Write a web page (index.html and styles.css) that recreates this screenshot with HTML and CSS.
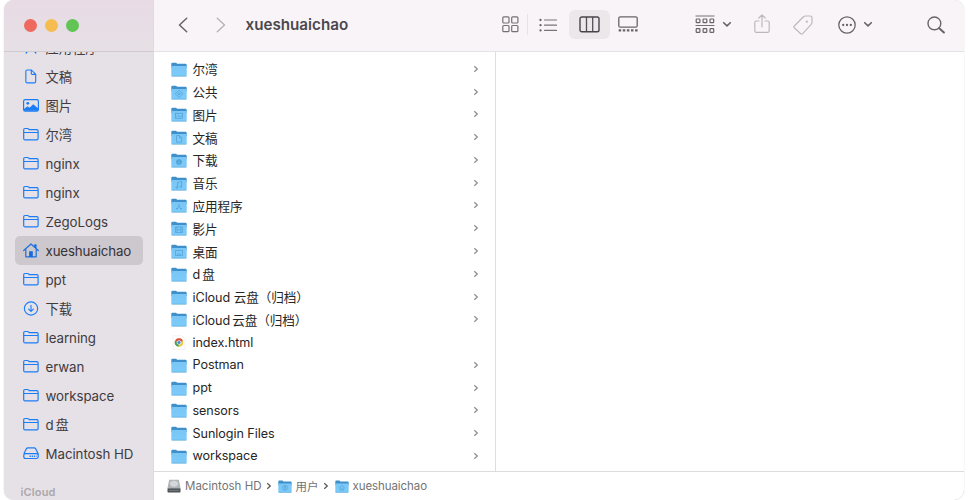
FILE: index.html
```html
<!DOCTYPE html>
<html lang="zh-CN">
<head>
<meta charset="utf-8">
<title>xueshuaichao</title>
<link rel="stylesheet" href="styles.css">
</head>
<body>
<svg class="defs" aria-hidden="true">
  <defs>
    <linearGradient id="blue" x1="0" y1="0" x2="0" y2="1"><stop offset="0" stop-color="#7ac6f5"/><stop offset="1" stop-color="#7ccbfa"/></linearGradient>
  </defs>
  <symbol id="side-folder" viewBox="0 0 16 14"><path d="M.7 11V2.300Q.7 1 2 1h2.600q.6 0 1 .5l.6.6h7.600q1.300 0 1.300 1.300v7.700q0 1.300-1.300 1.300H2Q.7 12.400 .7 11zM.7 5h14.400" fill="none" stroke="#1a7cf7" stroke-width="1.200"/></symbol>
  <symbol id="side-doc" viewBox="0 0 16 16"><path d="M3.800 1h4.700l4.500 4.500v7.800q0 1.500-1.500 1.500H4q-1.500 0-1.500-1.500V2.500Q2.500 1 3.800 1zM8.300 1v3.500q0 1.200 1.200 1.200H13" fill="none" stroke="#1a7cf7" stroke-width="1.200"/></symbol>
  <symbol id="side-image" viewBox="0 0 16 14"><rect x=".6" y="1.100" width="14.800" height="11.500" rx="1.600" fill="none" stroke="#1a7cf7" stroke-width="1.200"/><circle cx="4.800" cy="4.800" r="1.400" fill="#1a7cf7"/><path d="M1 10.500l3.500-2.800 2 1.500 3.700-3.500L15 9.800v2.500H1z" fill="#1a7cf7"/></symbol>
  <symbol id="side-home" viewBox="0 0 16 15"><path d="M.7 7.500L8 1l7.300 6.500M2.800 6.500v7.300h10.400V6.500M11.800 4V1.800h1.200V5" fill="none" stroke="#1a6fe0" stroke-width="1.200" stroke-linejoin="round" stroke-linecap="round"/><path d="M6.100 8.200h3.700V14H6.100z" fill="#1769dc"/></symbol>
  <symbol id="side-down" viewBox="0 0 16 16"><circle cx="8" cy="8" r="7.100" fill="none" stroke="#1a7cf7" stroke-width="1.200"/><path d="M8 4.600v6.300M5.500 8.600L8 11l2.500-2.400" fill="none" stroke="#1a7cf7" stroke-width="1.200" stroke-linecap="round" stroke-linejoin="round"/></symbol>
  <symbol id="side-disk" viewBox="0 0 16 13"><path d="M.8 7L3.200 2Q3.700.9 5 .9h6q1.300 0 1.800 1.100L15.200 7v2.800q0 1.700-1.700 1.700h-11Q.8 11.500.8 9.800V8.200Q.8 6.600 2.500 6.600h11q1.700 0 1.700 1.600" fill="none" stroke="#1a7cf7" stroke-width="1.200"/><path d="M6.500 9.200h7" stroke="#1a7cf7" stroke-width="1.400" stroke-dasharray="1.300 .9"/></symbol>
  <symbol id="side-app" viewBox="0 0 16 14"><path d="M7 2l6 11M9 2L3 13M1 9.500h14" fill="none" stroke="#1a7cf7" stroke-width="1.500"/></symbol>
  <symbol id="folder" viewBox="0 0 16 15"><path d="M.3 1.700Q.3.700 1.300.700h3.800l1 1.100h8.400q1.200 0 1.200 1.200v3H.3z" fill="#3f8fca"/><path d="M.3 4h15.400v9.300q0 1-1 1H1.300q-1 0-1-1z" fill="url(#blue)"/><path class="edge" d="M.5 13.700h15v.8H.5z" fill="#63a9d8"/></symbol>
  <symbol id="chevron" viewBox="0 0 6 8"><path d="M1.300 1.300L4.300 4 1.300 6.700" fill="none" stroke="currentColor" stroke-width="1.200"/></symbol>
  <symbol id="down" viewBox="0 0 10 7"><path d="M1.700 1.700L5 4.900l3.300-3.200" fill="none" stroke="#69646a" stroke-width="1.600" stroke-linecap="round" stroke-linejoin="round"/></symbol>
  <symbol id="m-public" viewBox="0 0 16 15"><path d="M8 5.200l3.700 3.700L8 12.600 4.300 8.900z"/><circle cx="8" cy="8.900" r="1"/></symbol>
  <symbol id="m-image" viewBox="0 0 16 15"><rect x="4.500" y="6.300" width="7" height="5"/><path d="M5 10.500l2-2 2 1.500 2-1"/></symbol>
  <symbol id="m-doc" viewBox="0 0 16 15"><path d="M5.500 5.500h3l2.200 2.200v4.500H5.500zM8.500 5.500v2.300h2"/></symbol>
  <symbol id="m-down" viewBox="0 0 16 15"><circle cx="8" cy="9" r="2.500" fill="#4e9fd4"/><path d="M8 7.500v3M7 9.500l1 1 1-1" stroke="#7ac6f5"/></symbol>
  <symbol id="m-music" viewBox="0 0 16 15"><path d="M6.600 11.500v-5l4-1v5"/><circle cx="5.800" cy="11.500" r=".8"/><circle cx="9.800" cy="10.700" r=".8"/></symbol>
  <symbol id="m-app" viewBox="0 0 16 15"><path d="M8 6v2l-2.500 3.500M8 8l2.500 3.500M5 10.500h2M9 10.500h2"/></symbol>
  <symbol id="m-film" viewBox="0 0 16 15"><path d="M4.500 6h7v5.500h-7zM6 6v5.500M10 6v5.500M6 8.800h4"/></symbol>
  <symbol id="m-desk" viewBox="0 0 16 15"><path d="M4.500 6.500h7v5h-7zM6 10.200h4"/></symbol>
  <symbol id="m-user" viewBox="0 0 16 15"><circle cx="8" cy="9" r="2.800"/><circle cx="8" cy="8.200" r=".8"/><path d="M6.300 11q1.700-2 3.400 0"/></symbol>
  <symbol id="m-home" viewBox="0 0 16 15"><path d="M5 9l3-2.800L11 9M6 8.500v3.200h4V8.500M8 9.500v2"/></symbol>
</svg>

<div class="window">
  <aside class="sidebar">
    <header class="lights"><i class="red"></i><i class="yellow"></i><i class="green"></i></header>
    <nav class="places">
      <a class="first"><svg><use href="#side-app"/></svg><span>应用程序</span></a>
      <a><svg><use href="#side-doc"/></svg><span>文稿</span></a>
      <a><svg><use href="#side-image"/></svg><span>图片</span></a>
      <a><svg><use href="#side-folder"/></svg><span>尔湾</span></a>
      <a><svg><use href="#side-folder"/></svg><span>nginx</span></a>
      <a><svg><use href="#side-folder"/></svg><span>nginx</span></a>
      <a><svg><use href="#side-folder"/></svg><span>ZegoLogs</span></a>
      <a class="selected"><svg><use href="#side-home"/></svg><span>xueshuaichao</span></a>
      <a><svg><use href="#side-folder"/></svg><span>ppt</span></a>
      <a><svg><use href="#side-down"/></svg><span>下载</span></a>
      <a><svg><use href="#side-folder"/></svg><span>learning</span></a>
      <a><svg><use href="#side-folder"/></svg><span>erwan</span></a>
      <a><svg><use href="#side-folder"/></svg><span>workspace</span></a>
      <a><svg><use href="#side-folder"/></svg><span>d<b class="thin"></b>盘</span></a>
      <a><svg><use href="#side-disk"/></svg><span>Macintosh HD</span></a>
    </nav>
    <h2>iCloud</h2>
  </aside>

  <main class="main">
    <header class="toolbar">
      <svg class="back" viewBox="0 0 10 16"><path d="M8.700 1.200L1.500 8l7.200 6.800" fill="none" stroke="#69646a" stroke-width="1.500" stroke-linecap="round" stroke-linejoin="round"/></svg>
      <svg class="forward" viewBox="0 0 10 16"><path d="M1.300 1.200L8.500 8l-7.200 6.800" fill="none" stroke="#b9b4b9" stroke-width="1.500" stroke-linecap="round" stroke-linejoin="round"/></svg>
      <h1>xueshuaichao</h1>
      <svg class="grid" viewBox="0 0 17 17"><g fill="none" stroke="#767077" stroke-width="1.200"><rect x=".8" y=".8" width="6.200" height="6.200" rx="1"/><rect x="9.700" y=".8" width="6.200" height="6.200" rx="1"/><rect x=".8" y="9.500" width="6.200" height="6.200" rx="1"/><rect x="9.700" y="9.500" width="6.200" height="6.200" rx="1"/></g></svg>
      <i class="rule"></i>
      <svg class="list" viewBox="0 0 19 14"><g fill="#69646a"><circle cx="1.500" cy="2" r="1.150"/><circle cx="1.500" cy="7.200" r="1.150"/><circle cx="1.500" cy="12.400" r="1.150"/></g><path d="M5.500 2h12M5.500 7.200h12M5.500 12.400h12" stroke="#79737a" stroke-width="1.200" stroke-linecap="round"/></svg>
      <span class="active"><svg viewBox="0 0 21 17"><path d="M7.500 1v15M13.700 1v15" stroke="#545056" stroke-width="1.300"/><rect x="1" y="1" width="19" height="14.700" rx="1.800" fill="none" stroke="#49454b" stroke-width="1.400"/></svg></span>
      <svg class="gallery" viewBox="0 0 20 17"><rect x=".8" y=".8" width="18.400" height="10.400" rx="1.500" fill="none" stroke="#69646a" stroke-width="1.300"/><path d="M.7 14.400h19" stroke="#69646a" stroke-width="2.400" stroke-dasharray="2.500 1.600"/></svg>
      <svg class="group" viewBox="0 0 20 19"><path d="M.5 1h19M.5 10.500h19" stroke="#767077" stroke-width="1.200"/><g fill="none" stroke="#69646a" stroke-width="1.200"><rect x="1.200" y="4" width="3.700" height="3.700" rx=".7"/><rect x="8.100" y="4" width="3.700" height="3.700" rx=".7"/><rect x="15" y="4" width="3.700" height="3.700" rx=".7"/><rect x="1.200" y="13.700" width="3.700" height="3.700" rx=".7"/><rect x="8.100" y="13.700" width="3.700" height="3.700" rx=".7"/><rect x="15" y="13.700" width="3.700" height="3.700" rx=".7"/></g></svg>
      <svg class="down"><use href="#down"/></svg>
      <svg class="share" viewBox="0 0 16 20"><path d="M5 7H2.200Q.8 7 .8 8.400v8.400q0 1.600 1.600 1.600h11.200q1.600 0 1.600-1.600V8.400Q15.200 7 13.800 7H11M8 13V1.200M4.800 4L8 1l3.200 3" fill="none" stroke="#bdb8bd" stroke-width="1.200" stroke-linecap="round" stroke-linejoin="round"/></svg>
      <svg class="tag" viewBox="0 0 20 20"><path d="M1.300 11L10.200 2q1-1 2.500-1h4.500q1.800 0 1.800 1.800v4.500q0 1.400-1 2.400l-8.300 9q-1 1-2 0l-6.400-6q-.9-.8 0-1.700z" fill="none" stroke="#bdb8bd" stroke-width="1.200"/><circle cx="13.800" cy="6.700" r="1.100" fill="#bdb8bd"/></svg>
      <svg class="more" viewBox="0 0 18 18"><circle cx="9" cy="9" r="8.200" fill="none" stroke="#69646a" stroke-width="1.300"/><g fill="#69646a"><circle cx="5.200" cy="9" r="1.150"/><circle cx="9" cy="9" r="1.150"/><circle cx="12.800" cy="9" r="1.150"/></g></svg>
      <svg class="down"><use href="#down"/></svg>
      <svg class="search" viewBox="0 0 18 18"><circle cx="7.400" cy="7.400" r="6.400" fill="none" stroke="#69646a" stroke-width="1.400"/><path d="M12.200 12.200l4.700 4.300" stroke="#69646a" stroke-width="2" stroke-linecap="round"/></svg>
    </header>

    <div class="columns">
      <ul class="files">
        <li><svg class="icon"><use href="#folder"/></svg><span>尔湾</span><svg class="arrow"><use href="#chevron"/></svg></li>
        <li><svg class="icon"><use href="#folder"/><use href="#m-public"/></svg><span>公共</span><svg class="arrow"><use href="#chevron"/></svg></li>
        <li><svg class="icon"><use href="#folder"/><use href="#m-image"/></svg><span>图片</span><svg class="arrow"><use href="#chevron"/></svg></li>
        <li><svg class="icon"><use href="#folder"/><use href="#m-doc"/></svg><span>文稿</span><svg class="arrow"><use href="#chevron"/></svg></li>
        <li><svg class="icon"><use href="#folder"/><use href="#m-down"/></svg><span>下载</span><svg class="arrow"><use href="#chevron"/></svg></li>
        <li><svg class="icon"><use href="#folder"/><use href="#m-music"/></svg><span>音乐</span><svg class="arrow"><use href="#chevron"/></svg></li>
        <li><svg class="icon"><use href="#folder"/><use href="#m-app"/></svg><span>应用程序</span><svg class="arrow"><use href="#chevron"/></svg></li>
        <li><svg class="icon"><use href="#folder"/><use href="#m-film"/></svg><span>影片</span><svg class="arrow"><use href="#chevron"/></svg></li>
        <li><svg class="icon"><use href="#folder"/><use href="#m-desk"/></svg><span>桌面</span><svg class="arrow"><use href="#chevron"/></svg></li>
        <li><svg class="icon"><use href="#folder"/></svg><span>d<b class="thin"></b>盘</span><svg class="arrow"><use href="#chevron"/></svg></li>
        <li><svg class="icon"><use href="#folder"/></svg><span>iCloud 云盘（归档）</span><svg class="arrow"><use href="#chevron"/></svg></li>
        <li><svg class="icon"><use href="#folder"/></svg><span>iCloud<b class="thin"></b>云盘（归档）</span><svg class="arrow"><use href="#chevron"/></svg></li>
        <li><svg class="icon html" viewBox="0 0 16 15"><path d="M2 .4h8.500L14 4v10.500H2z" fill="#fdfdfd" stroke="#ececec" stroke-width=".6"/><circle cx="8" cy="7.500" r="4.300" fill="#efc63f"/><path d="M4.100 5.700A4.300 4.300 0 0 1 11.900 5.700L8 7.500z" fill="#dd4a3f"/><path d="M4.100 5.700A4.300 4.300 0 0 0 7.500 11.800L8 7.500z" fill="#43a35a"/><circle cx="8" cy="7.500" r="1.900" fill="#3f7fdc" stroke="#fff" stroke-width=".7"/></svg><span>index.html</span></li>
        <li><svg class="icon"><use href="#folder"/></svg><span>Postman</span><svg class="arrow"><use href="#chevron"/></svg></li>
        <li><svg class="icon"><use href="#folder"/></svg><span>ppt</span><svg class="arrow"><use href="#chevron"/></svg></li>
        <li><svg class="icon"><use href="#folder"/></svg><span>sensors</span><svg class="arrow"><use href="#chevron"/></svg></li>
        <li><svg class="icon"><use href="#folder"/></svg><span>Sunlogin Files</span><svg class="arrow"><use href="#chevron"/></svg></li>
        <li><svg class="icon"><use href="#folder"/></svg><span>workspace</span><svg class="arrow"><use href="#chevron"/></svg></li>
      </ul>
      <div class="empty"></div>
    </div>

    <footer class="path">
      <svg class="hd" viewBox="0 0 14 14"><path d="M2.200.7h9.600L13.500 9H.5z" fill="#b0b4b6"/><ellipse cx="7" cy="4.800" rx="4" ry="3" fill="#d5d8d9"/><path d="M.5 9.300h13v3.500q0 .7-.7.700H1.200q-.7 0-.7-.7z" fill="#4d5356"/><path d="M2 11.400h10" stroke="#80888b" stroke-width=".8"/></svg>
      <span>Macintosh HD</span>
      <svg class="arrow"><use href="#chevron"/></svg>
      <svg class="mini"><use href="#folder"/><use href="#m-user"/></svg>
      <span>用户</span>
      <svg class="arrow"><use href="#chevron"/></svg>
      <svg class="mini"><use href="#folder"/><use href="#m-home"/></svg>
      <span class="current">xueshuaichao</span>
    </footer>
  </main>
</div>
</body>
</html>
```
FILE: styles.css
```css
* { box-sizing: border-box; }
body {
  margin: 0;
  width: 972px;
  height: 500px;
  overflow: hidden;
  background: #fff;
  font-family: Inter, "Noto Sans CJK SC", sans-serif;
  font-size: 13px;
  color: #262626;
}
svg { display: block; flex: none; }
.defs { position: absolute; width: 0; height: 0; }
.window {
  display: flex;
  width: 960px;
  height: 500px;
  margin-left: 4px;
  overflow: hidden;
  border-radius: 10px;
  background: #fff;
  box-shadow: 0 0 1px #aaa;
}

.sidebar {
  width: 150px;
  flex: none;
  display: flex;
  flex-direction: column;
  background: #e6e1e6;
  border-right: 1px solid #dedade;
}
.lights {
  height: 52px;
  flex: none;
  display: flex;
  align-items: center;
  gap: 7.700px;
  padding: 0 0 1px 20.300px;
  border-bottom: 1px solid #cfcacf;
  background: linear-gradient(#e8dbe5, #e6e0e5);
}
.lights i { width: 13px; height: 13px; border-radius: 50%; }
.red { background: #ee6a5f; }
.yellow { background: #f5bd4f; }
.green { background: #61c454; }
.places { height: 416px; overflow: hidden; padding: 0 10.500px 0 10.500px; }
.places a {
  height: 29px;
  display: flex;
  align-items: center;
  gap: 7px;
  padding-left: 8px;
  border-radius: 5px;
  font-size: 13.300px;
  letter-spacing: -.05px;
  color: #3f3b40;
  white-space: nowrap;
}
.places .first { margin-top: -19px; }
.places .selected { background: #cdc8cd; color: #363238; }
.places .selected span { letter-spacing: -.13px; }
.places svg { width: 16px; height: 15px; }
.thin { display: inline-block; width: 2px; }
.sidebar h2 {
  margin: 16px 0 0 16.500px;
  font-size: 11px;
  line-height: 16px;
  font-weight: 600;
  letter-spacing: .15px;
  color: #aca7ac;
}

.main { flex: 1; min-width: 0; display: flex; flex-direction: column; }
.toolbar {
  height: 52px;
  flex: none;
  display: flex;
  align-items: center;
  padding: 0 19.500px 2px 23.500px;
  background: #f9f4f8;
  border-bottom: 1px solid #e5e2e5;
}
.back, .forward { width: 10px; height: 16px; }
.forward { margin-left: 28px; }
.toolbar h1 { width: 230px; margin: 1px 0 0 20px; font-size: 15.200px; line-height: 20px; font-weight: 600; color: #4b474c; }
.grid { width: 17px; height: 17px; margin-left: 26px; }
.rule { width: 1px; height: 21px; margin-left: 8px; background: #e6e2e6; }
.list { width: 19px; height: 14px; margin-left: 11px; }
.active { display: flex; align-items: center; justify-content: center; width: 41px; height: 29px; margin: 0 0 0 11.500px; border-radius: 6px; background: #ece7eb; }
.active svg { width: 21px; height: 17px; }
.gallery { width: 20px; height: 17px; margin-left: 8px; }
.group { width: 20px; height: 19px; margin-left: 57px; }
.down { width: 10px; height: 7px; margin-left: 7px; }
.share { width: 16px; height: 20px; margin: -1px 0 0 22px; }
.tag { width: 20px; height: 20px; margin-left: 23px; }
.more { width: 18px; height: 18px; margin-left: 25px; }
.search { width: 18px; height: 18px; margin-left: auto; }

.columns { flex: 1; min-height: 0; display: flex; }
.files {
  width: 342px;
  flex: none;
  margin: 0;
  padding: 5.500px 16px 0 17px;
  list-style: none;
  border-right: 1px solid #dedede;
}
.files li { height: 22.770px; display: flex; align-items: center; font-size: 12.600px; letter-spacing: -.06px; white-space: nowrap; }
.icon { width: 16px; height: 15px; margin: 1px 5.500px 0 0; }
.icon, .mini { fill: none; stroke: #4e9fd4; stroke-width: .7; }
#folder path, .html { stroke: none; }
.arrow { width: 6px; height: 8px; margin-left: auto; color: #8c8c8c; stroke: none; }

.path {
  height: 29px;
  flex: none;
  display: flex;
  align-items: center;
  padding-left: 13px;
  border-top: 1px solid #dcdcdc;
  font-size: 11.500px;
  color: #747474;
}
.hd { width: 14px; height: 14px; margin-right: 4px; }
.mini { width: 14px; height: 13px; margin: 0 4px 0 4.500px; }
.path .arrow { margin: 0 1px 0 4.500px; color: #555; }
.current { letter-spacing: -.08px; }
```
